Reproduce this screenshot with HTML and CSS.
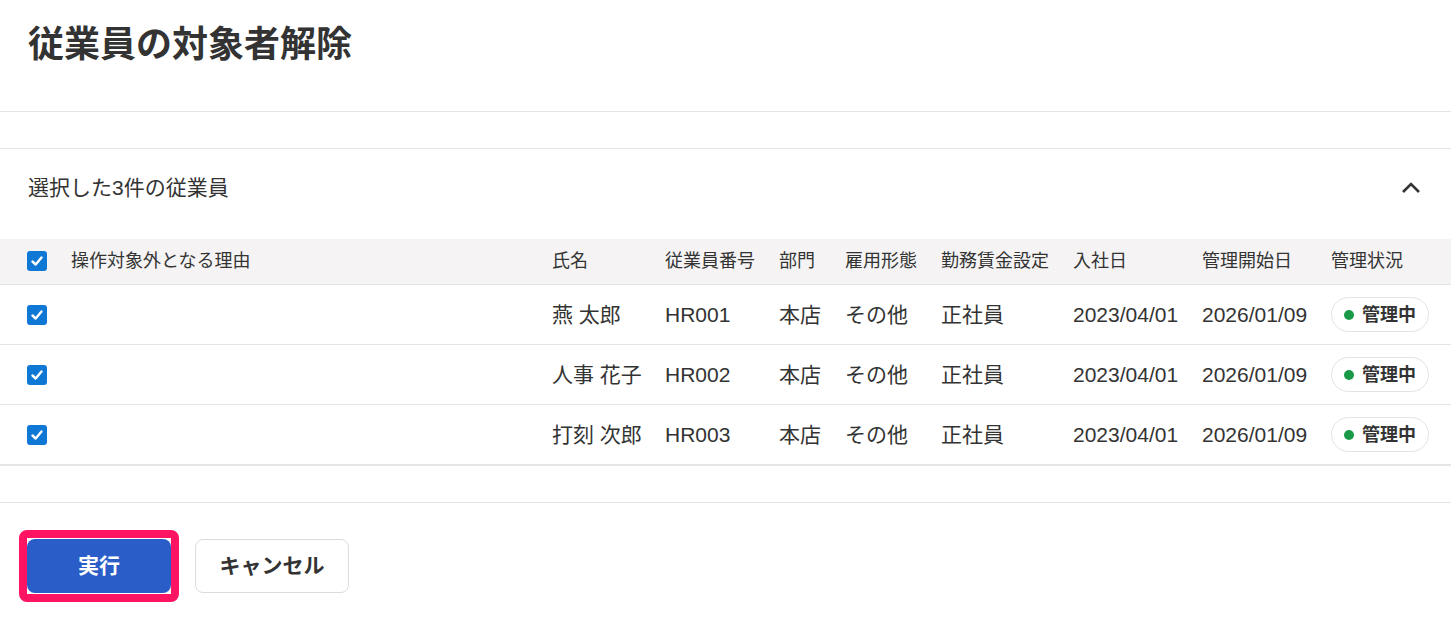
FILE: index.html
```html
<!DOCTYPE html>
<html lang="ja">
<head>
    <meta charset="UTF-8">
    <meta name="viewport" content="width=device-width, initial-scale=1.0">
    <title>従業員の対象者解除</title>
    <link rel="stylesheet" href="styles.css">
</head>
<body>
    <header class="page-head">
        <h1>従業員の対象者解除</h1>
    </header>

    <section class="panel">
        <div class="panel-head">
            <span>選択した3件の従業員</span>
            <svg class="chevron" width="20" height="14" viewBox="0 0 20 14">
                <polyline points="2,11 10,3 18,11" fill="none" stroke="#333" stroke-width="2.6"/>
            </svg>
        </div>

        <div class="grid">
            <div class="row head-row">
                <span class="check"><svg width="14" height="14" viewBox="0 0 14 14"><polyline points="2.5,7.5 5.7,10.5 11.5,3.5" fill="none" stroke="#fff" stroke-width="2.4" stroke-linecap="round" stroke-linejoin="round"/></svg></span>
                <span>操作対象外となる理由</span>
                <span>氏名</span>
                <span>従業員番号</span>
                <span>部門</span>
                <span>雇用形態</span>
                <span>勤務賃金設定</span>
                <span>入社日</span>
                <span>管理開始日</span>
                <span>管理状況</span>
            </div>
            <div class="row">
                <span class="check"><svg width="14" height="14" viewBox="0 0 14 14"><polyline points="2.5,7.5 5.7,10.5 11.5,3.5" fill="none" stroke="#fff" stroke-width="2.4" stroke-linecap="round" stroke-linejoin="round"/></svg></span>
                <span></span>
                <span>燕 太郎</span>
                <span>HR001</span>
                <span>本店</span>
                <span>その他</span>
                <span>正社員</span>
                <span>2023/04/01</span>
                <span>2026/01/09</span>
                <span><span class="badge"><i class="dot"></i>管理中</span></span>
            </div>
            <div class="row">
                <span class="check"><svg width="14" height="14" viewBox="0 0 14 14"><polyline points="2.5,7.5 5.7,10.5 11.5,3.5" fill="none" stroke="#fff" stroke-width="2.4" stroke-linecap="round" stroke-linejoin="round"/></svg></span>
                <span></span>
                <span>人事 花子</span>
                <span>HR002</span>
                <span>本店</span>
                <span>その他</span>
                <span>正社員</span>
                <span>2023/04/01</span>
                <span>2026/01/09</span>
                <span><span class="badge"><i class="dot"></i>管理中</span></span>
            </div>
            <div class="row last">
                <span class="check"><svg width="14" height="14" viewBox="0 0 14 14"><polyline points="2.5,7.5 5.7,10.5 11.5,3.5" fill="none" stroke="#fff" stroke-width="2.4" stroke-linecap="round" stroke-linejoin="round"/></svg></span>
                <span></span>
                <span>打刻 次郎</span>
                <span>HR003</span>
                <span>本店</span>
                <span>その他</span>
                <span>正社員</span>
                <span>2023/04/01</span>
                <span>2026/01/09</span>
                <span><span class="badge"><i class="dot"></i>管理中</span></span>
            </div>
        </div>
    </section>

    <footer class="actions">
        <span class="highlight">
            <button class="btn primary">実行</button>
        </span>
        <button class="btn">キャンセル</button>
    </footer>
</body>
</html>
```

FILE: styles.css
```css
body {
    margin: 0;
    background-color: white;
    color: #333;
    font-family: "Liberation Sans", "Noto Sans CJK JP", sans-serif;
}
.page-head {
    box-sizing: border-box;
    padding: 25px 28px 0;
    border-bottom: 1px solid #e5e5e5;
    height: 112px;
}
.page-head h1 {
    margin: 0;
    font-size: 36px;
    line-height: 40px;
    font-weight: bold;
}
.panel {
    margin-top: 36px;
    border-top: 1px solid #e5e5e5;
}
.panel-head {
    display: flex;
    justify-content: space-between;
    align-items: center;
    height: 90px;
    box-sizing: border-box;
    padding: 0 30px 12px 28px;
    font-size: 21px;
    line-height: 28px;
}
.row {
    display: grid;
    grid-template-columns: 44px 481px 113px 114px 66px 96px 132px 129px 129px 1fr;
    align-items: center;
    padding-left: 27px;
    height: 60px;
    box-sizing: border-box;
    border-bottom: 1px solid #e5e5e5;
    font-size: 21px;
    line-height: 28px;
}
.head-row {
    height: 46px;
    background-color: #f5f3f3;
    font-size: 18px;
    line-height: 24px;
    padding-bottom: 2px;
}
.row.last {
    border-bottom: 2px solid #e5e5e5;
    height: 61px;
}
.check {
    width: 20px;
    height: 20px;
    border-radius: 3px;
    background-color: #0f78d4;
    display: flex;
    align-items: center;
    justify-content: center;
}
.badge {
    display: inline-flex;
    align-items: center;
    height: 35px;
    box-sizing: border-box;
    padding: 0 12px;
    border: 1px solid #e3e3e3;
    border-radius: 18px;
    font-size: 18px;
    line-height: 24px;
    font-weight: bold;
}
.dot {
    width: 10px;
    height: 10px;
    border-radius: 50%;
    background-color: #1a9a48;
    margin-right: 8px;
}
.actions {
    margin-top: 36px;
    border-top: 1px solid #e5e5e5;
    padding: 27px 19px;
    display: flex;
    align-items: center;
    gap: 16px;
}
.highlight {
    display: inline-block;
    border: 8px solid #ff1463;
    border-radius: 8px;
    padding: 1px 0;
}
.btn {
    height: 54px;
    width: 154px;
    box-sizing: border-box;
    padding: 0 0 4px;
    border-radius: 8px;
    border: 1px solid #dcdcdc;
    background-color: white;
    color: #333;
    font-family: inherit;
    font-size: 21px;
    font-weight: bold;
    cursor: pointer;
}
.btn.primary {
    display: block;
    width: 144px;
    border: none;
    background-color: #2b5dc9;
    color: white;
}
```
